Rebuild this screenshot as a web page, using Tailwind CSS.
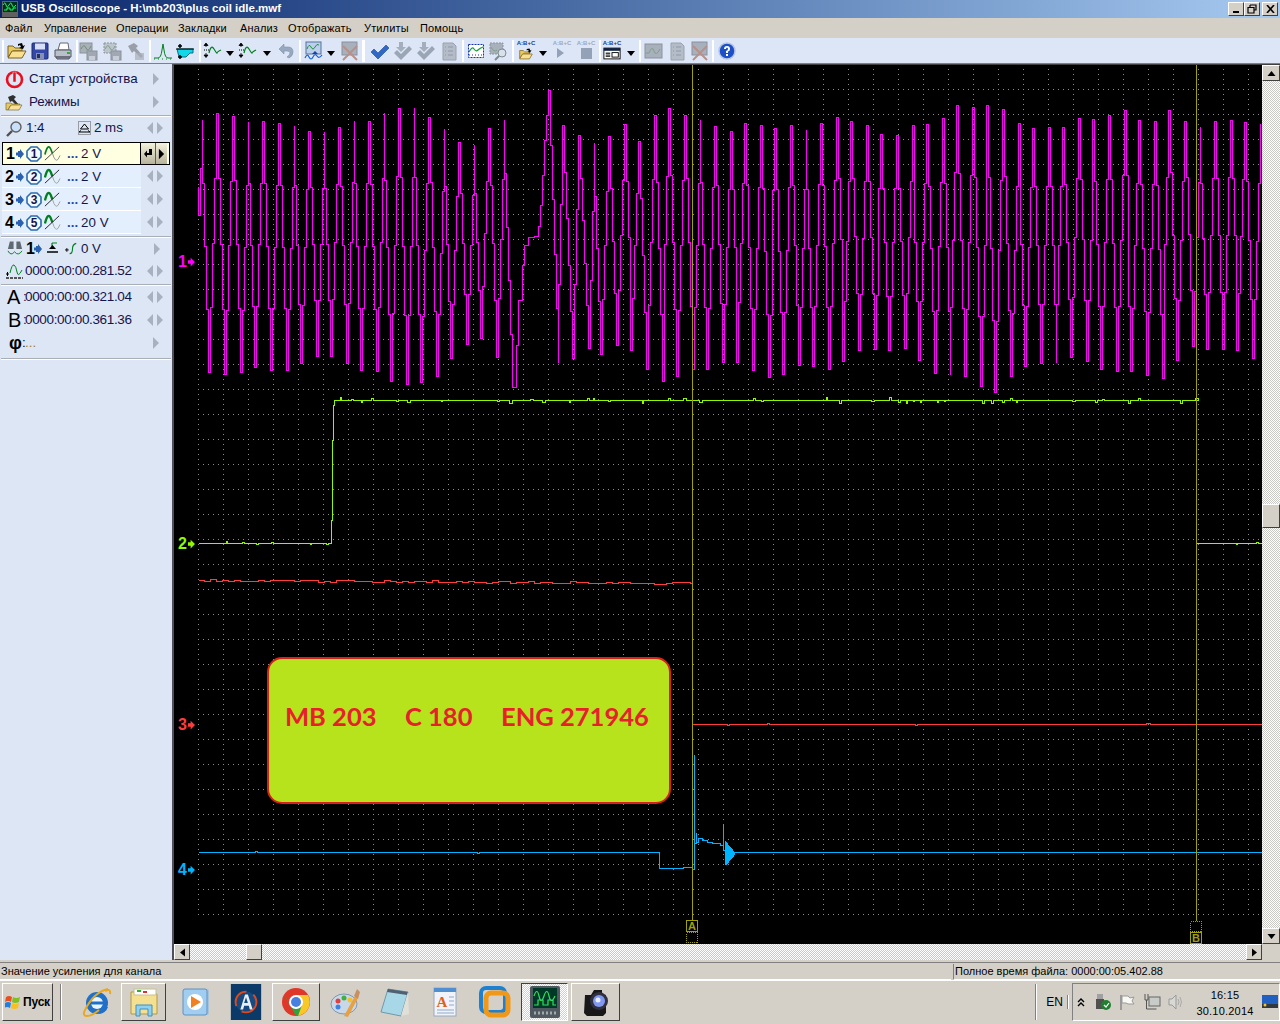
<!DOCTYPE html>
<html lang="ru">
<head>
<meta charset="utf-8">
<title>USB Oscilloscope</title>
<script src="https://cdn.jsdelivr.net/npm/@tailwindcss/browser@4"></script>
</head>
<body class="m-0 bg-[#d4d0c8]">
<svg width="0" height="0" class="absolute">
<defs>
<symbol id="folder" viewBox="0 0 20 20"><path d="M1 16V5h5l2 2h7v3H6L1 16z" fill="#e8c860" stroke="#7a6020"/><path d="M1 17l4-7h14l-4 7z" fill="#f8e090" stroke="#7a6020"/><path d="M11 3l4-1 1 3 2-1-2 4-4-1 2-1-1-2-2 1z" fill="#000"/></symbol>
<symbol id="save" viewBox="0 0 20 20"><rect x="2" y="2" width="16" height="16" rx="1" fill="#3448a8" stroke="#1c2870"/><rect x="5" y="2.500" width="10" height="6" fill="#d8e0f8"/><rect x="6" y="12" width="8" height="6" fill="#8890b0"/><rect x="7" y="13" width="3" height="4" fill="#20306c"/></symbol>
<symbol id="print" viewBox="0 0 20 20"><path d="M5 9l2-7h8l1 7z" fill="#fff" stroke="#667"/><path d="M2 9h16v7H2z" fill="#b8c0c8" stroke="#556"/><path d="M3 16l1 2h12l1-2z" fill="#8890a0" stroke="#556"/><rect x="14" y="11" width="3" height="2" fill="#30b030"/></symbol>
<symbol id="gw1" viewBox="0 0 20 20"><rect x="1" y="2" width="12" height="10" fill="#a8b0b8" stroke="#8a929a"/><path d="M2 8q3-6 5-1t5-2" fill="none" stroke="#6f8f78"/><rect x="8" y="10" width="10" height="9" fill="#a0a8b4" stroke="#8a929a"/><rect x="10" y="15" width="6" height="4" fill="#c8cdd8"/></symbol>
<symbol id="gw2" viewBox="0 0 20 20"><rect x="1" y="2" width="12" height="10" fill="#bcc4cc" stroke="#8a929a" stroke-dasharray="2 1"/><path d="M2 8q3-6 5-1t5-2" fill="none" stroke="#7f9f88"/><rect x="8" y="10" width="10" height="9" fill="#a0a8b4" stroke="#8a929a"/><rect x="10" y="15" width="6" height="4" fill="#c8cdd8"/></symbol>
<symbol id="hammer" viewBox="0 0 20 20"><path d="M2 5l6-3 4 3-2 2 7 8-2 2-7-7-2 2z" fill="#9aa0aa"/><rect x="9" y="12" width="9" height="7" fill="#a8aeb8" opacity=".7"/></symbol>
<symbol id="peak" viewBox="0 0 20 20"><path d="M1 17h4q3 0 4-8l1-6 1 6q1 8 4 8h4" fill="none" stroke="#00801c"/><path d="M1 18h18" stroke="#00801c" stroke-dasharray="1 3"/></symbol>
<symbol id="cyan" viewBox="0 0 20 20"><path d="M2 8h16v4h-3l-4 4H4z" fill="#10d8e8" stroke="#087080"/><path d="M5 3v4M3 5h4M5 14v4M3 16h4" stroke="#000" stroke-width="1.500"/><path d="M1 8h18" stroke="#000"/></symbol>
<symbol id="gain" viewBox="0 0 20 20"><path d="M3 3v3M1 4.500L3 2l2 2.500zM1 14l2 2.500L5 14zM3 12v3" stroke="#000" fill="#000" stroke-width=".8"/><path d="M1 9h5" stroke="#000" stroke-dasharray="1 1"/><path d="M6 12q2-9 5-4t3 4 4-3" fill="none" stroke="#008020" stroke-width="1.200"/></symbol>
<symbol id="undo" viewBox="0 0 20 20"><path d="M3 8l5-5v3h4q5 0 5 5 0 4-4 6l-2-1q3-2 3-4 0-2-3-2H8v3z" fill="#98a8c0" stroke="#8090a8" stroke-width=".6"/></symbol>
<symbol id="cmp" viewBox="0 0 20 20"><rect x="2" y="1" width="15" height="12" fill="#bcd0ee" stroke="#56709c"/><path d="M3 8q2-6 4-2t4 0 4-2" fill="none" stroke="#209040"/><path d="M1 17q2-5 4-1t4 0 4-1 5-1" fill="none" stroke="#1060e0" stroke-width="1.200"/><path d="M8 13l3-3 3 3z" fill="#2040a0"/></symbol>
<symbol id="xg" viewBox="0 0 20 20"><rect x="2" y="1" width="15" height="13" fill="#a8b0bc" stroke="#8890a0"/><path d="M3 5l14 14M17 5L3 19" stroke="#b89088" stroke-width="2"/></symbol>
<symbol id="check" viewBox="0 0 20 20"><path d="M1 11l3-3 4 4 8-8 3 3-11 11z" fill="#3068c8" stroke="#1c488c" stroke-width=".6"/></symbol>
<symbol id="checkd" viewBox="0 0 20 20"><path d="M1 12l3-3 4 4 8-8 3 3-11 11z" fill="#9aa5b5"/><path d="M6 6V1h4v5h3l-5 5-5-5z" fill="#a4aebc"/></symbol>
<symbol id="doc" viewBox="0 0 20 20"><path d="M4 2h10l3 3v14H4z" fill="#b4bcc8" stroke="#98a2b0"/><path d="M6 6h1M9 6h5M6 10h1M9 10h5M6 14h1M9 14h5" stroke="#8e98a8"/></symbol>
<symbol id="frame" viewBox="0 0 20 20"><rect x="2.500" y="3.500" width="15" height="13" fill="#fff" stroke="#1030b0" stroke-dasharray="2 1"/><path d="M3 11q3-6 5-3t4 1 5-3" fill="none" stroke="#10a030" stroke-width="1.200"/><path d="M3 14h14" stroke="#1030b0" stroke-dasharray="1 2"/></symbol>
<symbol id="zoomg" viewBox="0 0 20 20"><rect x="1" y="2" width="13" height="11" fill="#a8b0bc" stroke="#8a929e" stroke-dasharray="2 1"/><path d="M2 6q3 6 6 3" fill="none" stroke="#7f9f88"/><circle cx="13" cy="12" r="4" fill="#d8e0ec" stroke="#808890"/><path d="M10 15l-4 4" stroke="#808890" stroke-width="2"/></symbol>
<symbol id="scr" viewBox="0 0 20 14"><rect x="1" y="1" width="18" height="12" fill="#fff" stroke="#000"/><rect x="1" y="1" width="18" height="3" fill="#102040"/><path d="M3 7h5M3 10h5" stroke="#404040" stroke-width="2"/><rect x="10" y="6" width="7" height="5" fill="#fff" stroke="#000"/></symbol>
<symbol id="wgd" viewBox="0 0 20 20"><rect x="1" y="3" width="17" height="14" fill="#a8b0bc" stroke="#8a929e"/><path d="M2 12h3q3-8 5-2t6-2" fill="none" stroke="#7f9f88"/></symbol>
<symbol id="help" viewBox="0 0 20 20"><circle cx="10" cy="10" r="8" fill="#1c50c8" stroke="#b8c4e0" stroke-width="1.500"/><path d="M7 8q0-3 3-3t3 3q0 2-2 2.500V12H9v-2q2-.5 2-2t-1-1.500T9 8z" fill="#fff"/><rect x="9" y="13" width="2" height="2" fill="#fff"/></symbol>
<symbol id="tri" viewBox="0 0 8 5"><path d="M0 0h8L4 5z" fill="#000"/></symbol>
<symbol id="lr" viewBox="0 0 18 12"><path d="M7 0v12L1 6zM11 0v12l6-6z" fill="#a8b1bf"/></symbol>
<symbol id="r" viewBox="0 0 8 12"><path d="M1 0v12l6-6z" fill="#a8b1bf"/></symbol>
<symbol id="ba" viewBox="0 0 8 10"><path d="M0 3.500h2V2h2V0l4 5-4 5V8H2V6.500H0z" fill="#2a62b0"/></symbol>
<symbol id="ring" viewBox="0 0 16 16"><path d="M5 1h6l4 4v6l-4 4H5l-4-4V5z" fill="#f4f8ff" stroke="#2a6cb0" stroke-width="1.600"/></symbol>
<symbol id="wv" viewBox="0 0 18 18"><path d="M1 10q3-12 6-6l2 5" fill="none" stroke="#008020" stroke-width="1.800"/><path d="M9 9q3 10 6 6l2-4" fill="none" stroke="#909090"/><path d="M1 16L16 2" stroke="#404040"/></symbol>
<symbol id="wv2" viewBox="0 0 18 18"><path d="M1 10q3-12 6-6l2 5" fill="none" stroke="#008020" stroke-width="2.400"/><path d="M9 9q3 10 6 6l2-4" fill="none" stroke="#a0a0a0"/><path d="M1 16L16 2" stroke="#202020"/></symbol>
</defs>
</svg>

<div class="w-[1280px] h-[1024px] overflow-hidden flex flex-col bg-[#d4d0c8] font-['Liberation_Sans',Arial,sans-serif]">

<!-- title bar -->
<div class="h-[18px] flex items-center bg-gradient-to-r from-[#0a246a] to-[#a6caf0] shrink-0">
  <svg class="ml-[2px] w-[16px] h-[16px]" viewBox="0 0 16 16"><rect width="16" height="16" fill="#606060"/><rect x="1" y="1" width="14" height="10" fill="#003020"/><path d="M1 4q2-4 3 0t3 0 3 0 4 0M2 9h3V7h3v2h3V7h3" fill="none" stroke="#20ff60"/></svg>
  <span class="ml-[3px] text-white font-bold text-[11.500px] leading-none">USB Oscilloscope - H:\mb203\plus coil idle.mwf</span>
  <div class="ml-auto flex mr-[2px] gap-0">
    <div class="w-[16px] h-[14px] bg-[#d4d0c8] border border-t-white border-l-white border-r-[#404040] border-b-[#404040] flex items-end justify-center pb-[2px]"><div class="w-[6px] h-[2px] bg-black"></div></div>
    <div class="w-[16px] h-[14px] bg-[#d4d0c8] border border-t-white border-l-white border-r-[#404040] border-b-[#404040] flex items-center justify-center"><svg width="10" height="10" viewBox="0 0 10 10"><path d="M3 1h6v5H7M3 1v2M1 3.500h6v5.500H1z" fill="none" stroke="#000" stroke-width="1.200"/></svg></div>
    <div class="ml-[2px] w-[16px] h-[14px] bg-[#d4d0c8] border border-t-white border-l-white border-r-[#404040] border-b-[#404040] flex items-center justify-center"><svg width="9" height="8" viewBox="0 0 9 8"><path d="M1 0l7 8M8 0L1 8" stroke="#000" stroke-width="1.600"/></svg></div>
  </div>
</div>

<!-- menu -->
<div class="h-[20px] flex items-center pl-[5px] text-[11px] text-black shrink-0 tracking-[0.15px]">
  <span class="w-[39px]">Файл</span><span class="w-[72px]">Управление</span><span class="w-[62px]">Операции</span><span class="w-[62px]">Закладки</span><span class="w-[48px]">Анализ</span><span class="w-[76px]">Отображать</span><span class="w-[56px]">Утилиты</span><span>Помощь</span>
</div>

<!-- toolbar -->
<div class="h-[26px] flex items-center bg-[#dde6f6] shrink-0 border-b border-[#808080] relative">
  <div class="ml-[2px] w-[2px] h-[22px] bg-white"></div>
  <svg class="ml-[3px] w-[20px] h-[20px]"><use href="#folder"/></svg>
  <svg class="ml-[3px] w-[20px] h-[20px]"><use href="#save"/></svg>
  <svg class="ml-[3px] w-[20px] h-[20px]"><use href="#print"/></svg>
  <div class="ml-[3px] w-[2px] h-[22px] bg-white"></div>
  <svg class="ml-[1px] w-[20px] h-[20px]"><use href="#gw1"/></svg>
  <svg class="ml-[4px] w-[20px] h-[20px]"><use href="#gw2"/></svg>
  <svg class="ml-[3px] w-[20px] h-[20px]"><use href="#hammer"/></svg>
  <div class="ml-[3px] w-[2px] h-[22px] bg-white"></div>
  <svg class="ml-[2px] w-[20px] h-[20px]"><use href="#peak"/></svg>
  <svg class="ml-[2px] w-[20px] h-[20px]"><use href="#cyan"/></svg>
  <div class="ml-[4px] w-[2px] h-[22px] bg-white"></div>
  <svg class="ml-[2px] w-[20px] h-[20px]"><use href="#gain"/></svg>
  <svg class="ml-[3px] w-[8px] h-[5px] mt-[5px]"><use href="#tri"/></svg>
  <svg class="ml-[4px] w-[20px] h-[20px]"><use href="#gain"/></svg>
  <svg class="ml-[5px] w-[8px] h-[5px] mt-[5px]"><use href="#tri"/></svg>
  <svg class="ml-[5px] w-[20px] h-[20px]"><use href="#undo"/></svg>
  <div class="ml-[3px] w-[2px] h-[22px] bg-white"></div>
  <svg class="ml-[3px] w-[20px] h-[20px]"><use href="#cmp"/></svg>
  <svg class="ml-[3px] w-[8px] h-[5px] mt-[5px]"><use href="#tri"/></svg>
  <svg class="ml-[5px] w-[20px] h-[20px]"><use href="#xg"/></svg>
  <div class="ml-[2px] w-[3px] h-[22px] bg-white"></div>
  <svg class="ml-[5px] w-[20px] h-[20px]"><use href="#check"/></svg>
  <svg class="ml-[3px] w-[20px] h-[20px]"><use href="#checkd"/></svg>
  <svg class="ml-[3px] w-[20px] h-[20px]"><use href="#checkd"/></svg>
  <svg class="ml-[3px] w-[20px] h-[20px]"><use href="#doc"/></svg>
  <div class="ml-[3px] w-[2px] h-[22px] bg-white"></div>
  <svg class="ml-[2px] w-[20px] h-[20px]"><use href="#frame"/></svg>
  <svg class="ml-[3px] w-[20px] h-[20px]"><use href="#zoomg"/></svg>
  <div class="ml-[3px] w-[2px] h-[22px] bg-white"></div>
  <div class="ml-[2px] w-[20px] h-[22px] flex flex-col items-center"><span class="text-[6px] leading-[7px] font-bold text-[#1c3a90] whitespace-nowrap">A:B+C</span><svg class="w-[18px] h-[14px]" viewBox="0 0 20 16"><use href="#folder"/></svg></div>
  <svg class="ml-[3px] w-[8px] h-[5px] mt-[5px]"><use href="#tri"/></svg>
  <div class="ml-[5px] w-[20px] h-[22px] flex flex-col items-center"><span class="text-[6px] leading-[7px] font-bold text-[#a0a8b8] whitespace-nowrap">A:B+C</span><svg class="w-[10px] h-[13px] -ml-[2px]" viewBox="0 0 10 13"><path d="M1 1v10l7-5z" fill="#94a2b8"/></svg></div>
  <div class="ml-[4px] w-[20px] h-[22px] flex flex-col items-center"><span class="text-[6px] leading-[7px] font-bold text-[#a0a8b8] whitespace-nowrap">A:B+C</span><div class="w-[11px] h-[11px] mt-[1px] bg-[#94a2b8]"></div></div>
  <div class="ml-[3px] w-[2px] h-[22px] bg-white"></div>
  <div class="ml-[1px] w-[20px] h-[22px] flex flex-col items-center"><span class="text-[6px] leading-[7px] font-bold text-[#1c3a90] whitespace-nowrap">A:B+C</span><svg class="w-[18px] h-[13px]"><use href="#scr"/></svg></div>
  <svg class="ml-[5px] w-[8px] h-[5px] mt-[5px]"><use href="#tri"/></svg>
  <div class="ml-[4px] w-[2px] h-[22px] bg-white"></div>
  <svg class="ml-[3px] w-[20px] h-[20px]"><use href="#wgd"/></svg>
  <svg class="ml-[3px] w-[20px] h-[20px]"><use href="#doc"/></svg>
  <svg class="ml-[3px] w-[20px] h-[20px]"><use href="#xg"/></svg>
  <div class="ml-[2px] w-[2px] h-[22px] bg-white"></div>
  <svg class="ml-[3px] w-[20px] h-[20px]"><use href="#help"/></svg>
</div>

<!-- main -->
<div class="flex h-[896px] shrink-0">
  <!-- sidebar -->
  <aside class="w-[174px] shrink-0 bg-[#dce6f5] border-r-2 border-[#50505a] text-[#14144c] text-[13.330px] relative flex flex-col">
    <div class="mt-[1px] h-[28px] flex items-center pl-[5px]">
      <svg class="w-[19px] h-[19px]" viewBox="0 0 19 19"><circle cx="9.500" cy="9.500" r="7.500" fill="none" stroke="#e81020" stroke-width="2.600"/><rect x="8" y="2" width="3" height="10" fill="#e81020" stroke="#dce6f5" stroke-width=".5"/></svg>
      <span class="ml-[5px] w-[123px] whitespace-nowrap">Старт устройства</span>
      <svg class="w-[8px] h-[12px]"><use href="#r"/></svg>
    </div>
    <div class="h-[18px] flex items-center pl-[5px]">
      <svg class="w-[19px] h-[17px]" viewBox="0 0 19 17"><path d="M3 3l5-2 3 2-2 2 5 6-2 1-5-5-2 1z" fill="#303030"/><path d="M1 9h5l1 1h8l-1 2H5l-2 4H1z" fill="#e8c860" stroke="#6a5a20" stroke-width=".6"/><path d="M3 16l3-5h11l-3 5z" fill="#f8e098" stroke="#6a5a20" stroke-width=".6"/></svg>
      <span class="ml-[5px] w-[123px]">Режимы</span>
      <svg class="w-[8px] h-[12px]"><use href="#r"/></svg>
    </div>
    <div class="mt-[4px] h-[2px] mx-[1px] bg-[#a8adb6] border-b border-white"></div>
    <div class="h-[22px] flex items-center pl-[6px]">
      <svg class="w-[17px] h-[17px]" viewBox="0 0 17 17"><circle cx="10" cy="7" r="5" fill="#c8e0fa" stroke="#606060" stroke-width="1.400"/><path d="M6 11l-5 5" stroke="#505050" stroke-width="2.400"/></svg>
      <span class="ml-[3px] w-[52px]">1:4</span>
      <svg class="w-[13px] h-[14px]" viewBox="0 0 13 14"><rect x=".5" y=".5" width="12" height="13" fill="none" stroke="#555" stroke-dasharray="1 1"/><path d="M6.500 3l4 5h-8zM1 11h11M1 11l2-1.500M12 11l-2-1.500" fill="none" stroke="#000"/></svg>
      <span class="ml-[3px] w-[52px] whitespace-nowrap">2 ms</span>
      <svg class="w-[18px] h-[12px] mb-[1px]"><use href="#lr"/></svg>
    </div>
    <!-- channels -->
    <div class="mt-[3px] ml-[2px] w-[168px] h-[23px] flex items-center border border-black bg-[#ffffe1]">
      <span class="ml-[3px] w-[9px] text-[16px] font-bold text-black leading-none">1</span><svg class="w-[8px] h-[10px] ml-[1px]"><use href="#ba"/></svg>
      <div class="relative w-[16px] h-[16px] ml-[2px] flex items-center justify-center"><svg class="absolute inset-0 w-[16px] h-[16px]"><use href="#ring"/></svg><span class="relative text-[12px] font-bold text-[#14144c] leading-none">1</span></div>
      <svg class="w-[17px] h-[17px] ml-[2px]"><use href="#wv"/></svg>
      <span class="ml-[6px] text-[#1a4aa8] font-bold">...</span><span class="ml-[3px] w-[59px]">2 V</span>
      <div class="h-full w-[27px] flex items-center justify-center gap-[2px] bg-gradient-to-b from-[#f4f1dc] to-[#b8b49c] border-l border-black"><svg width="9" height="11" viewBox="0 0 9 11"><path d="M8 1H5v4H3V2.500L0 6l3 3.500V7h5z" fill="#000"/></svg><div class="w-px h-full bg-[#605c48]"></div><svg width="7" height="12" viewBox="0 0 8 12"><path d="M1 0v12l6-6z" fill="#000"/></svg></div>
    </div>
    <div class="ml-[2px] h-[23px] flex items-center">
      <div class="w-[139px] h-[23px] pt-[1px] flex items-center bg-[#e3effc] border-b border-white">
        <span class="ml-[3px] w-[9px] text-[16px] font-bold text-black leading-none">2</span><svg class="w-[8px] h-[10px] ml-[2px]"><use href="#ba"/></svg>
        <div class="relative w-[16px] h-[16px] ml-[2px] flex items-center justify-center"><svg class="absolute inset-0 w-[16px] h-[16px]"><use href="#ring"/></svg><span class="relative text-[12px] font-bold text-[#14144c] leading-none">2</span></div>
        <svg class="w-[17px] h-[17px] ml-[2px]"><use href="#wv2"/></svg>
        <span class="ml-[6px] text-[#1a4aa8] font-bold">...</span><span class="ml-[3px]">2 V</span>
      </div>
      <svg class="ml-[5px] mb-[2px] w-[18px] h-[12px]"><use href="#lr"/></svg>
    </div>
    <div class="ml-[2px] h-[23px] flex items-center">
      <div class="w-[139px] h-[23px] pt-[1px] flex items-center bg-[#e3effc] border-b border-white">
        <span class="ml-[3px] w-[9px] text-[16px] font-bold text-black leading-none">3</span><svg class="w-[8px] h-[10px] ml-[2px]"><use href="#ba"/></svg>
        <div class="relative w-[16px] h-[16px] ml-[2px] flex items-center justify-center"><svg class="absolute inset-0 w-[16px] h-[16px]"><use href="#ring"/></svg><span class="relative text-[12px] font-bold text-[#14144c] leading-none">3</span></div>
        <svg class="w-[17px] h-[17px] ml-[2px]"><use href="#wv2"/></svg>
        <span class="ml-[6px] text-[#1a4aa8] font-bold">...</span><span class="ml-[3px]">2 V</span>
      </div>
      <svg class="ml-[5px] mb-[2px] w-[18px] h-[12px]"><use href="#lr"/></svg>
    </div>
    <div class="ml-[2px] h-[23px] flex items-center">
      <div class="w-[139px] h-[23px] pt-[1px] flex items-center bg-[#e3effc] border-b border-white">
        <span class="ml-[3px] w-[9px] text-[16px] font-bold text-black leading-none">4</span><svg class="w-[8px] h-[10px] ml-[2px]"><use href="#ba"/></svg>
        <div class="relative w-[16px] h-[16px] ml-[2px] flex items-center justify-center"><svg class="absolute inset-0 w-[16px] h-[16px]"><use href="#ring"/></svg><span class="relative text-[12px] font-bold text-[#14144c] leading-none">5</span></div>
        <svg class="w-[17px] h-[17px] ml-[2px]"><use href="#wv2"/></svg>
        <span class="ml-[6px] text-[#1a4aa8] font-bold">...</span><span class="ml-[3px]">20 V</span>
      </div>
      <svg class="ml-[5px] mb-[2px] w-[18px] h-[12px]"><use href="#lr"/></svg>
    </div>
    <div class="mt-[2px] h-[2px] mx-[1px] bg-[#a8adb6] border-b border-white"></div>
    <div class="h-[21px] flex items-center pl-[7px]">
      <svg class="w-[16px] h-[17px]" viewBox="0 0 17 17"><path d="M3 1h4v8H1zM10 1h4l2 8h-6z" fill="#606870"/><path d="M1 11q3 6 7 1 4 5 8-1" fill="none" stroke="#008020"/></svg>
      <span class="ml-[3px] w-[8px] text-[16px] font-bold leading-none text-black">1</span><svg class="w-[8px] h-[10px]"><use href="#ba"/></svg>
      <svg class="ml-[4px] w-[13px] h-[13px]" viewBox="0 0 13 13"><path d="M6 1h5M6 1v5" fill="none" stroke="#008020" stroke-width="1.200"/><path d="M3 7h7l-3.500-4z" fill="#000"/><path d="M1 10h11" stroke="#000" stroke-width="1.500"/></svg>
      <svg class="ml-[6px] w-[14px] h-[14px]" viewBox="0 0 15 14"><path d="M0 8h4M2 6v4" stroke="#000"/><path d="M5 12q3 0 3-5t4-6" fill="none" stroke="#008020" stroke-width="1.200"/></svg>
      <span class="ml-[2px] w-[72px] whitespace-nowrap">0 V</span>
      <svg class="w-[8px] h-[12px]"><use href="#r"/></svg>
    </div>
    <div class="h-[24px] flex items-center pl-[5px] tracking-[-0.35px] text-[13.500px]">
      <svg class="w-[19px] h-[18px]" viewBox="0 0 19 18"><path d="M1 12h3M2.500 10v4" stroke="#000"/><path d="M5 11q2-9 4-8t3 7 5-2" fill="none" stroke="#008020"/><path d="M1 16h17" stroke="#555" stroke-width="2" stroke-dasharray="3 1"/></svg>
      <span class="ml-[1px] w-[113px] whitespace-nowrap">0000:00:00.281.52</span>
      <svg class="ml-[8px] w-[18px] h-[12px]"><use href="#lr"/></svg>
    </div>
    <div class="mt-[1px] h-[2px] mx-[1px] bg-[#a8adb6] border-b border-white"></div>
    <div class="h-[22px] flex items-center pl-[7px] tracking-[-0.35px] text-[13.500px]">
      <span class="text-[20px] leading-none text-black w-[16px]">A</span><span class="w-[2px]">:</span>
      <span class="w-[115px] whitespace-nowrap">0000:00:00.321.04</span>
      <svg class="ml-[6px] w-[18px] h-[12px]"><use href="#lr"/></svg>
    </div>
    <div class="h-[24px] flex items-center pl-[8px] tracking-[-0.35px] text-[13.500px]">
      <span class="text-[20px] leading-none text-black w-[15px]">B</span><span class="w-[2px]">:</span>
      <span class="w-[115px] whitespace-nowrap">0000:00:00.361.36</span>
      <svg class="ml-[6px] w-[18px] h-[12px]"><use href="#lr"/></svg>
    </div>
    <div class="h-[21px] flex items-center pl-[9px]">
      <span class="text-[18px] leading-none text-black font-bold w-[13px]">φ</span><span class="w-[2px] text-[#14144c]">:</span><span class="ml-[1px] w-[127px] text-[#a08030]">...</span>
      <svg class="w-[8px] h-[12px]"><use href="#r"/></svg>
    </div>
    <div class="mt-[5px] h-[2px] mx-[1px] bg-[#a8adb6] border-b border-white"></div>
  </aside>

  <!-- plot + scrollbars -->
  <div class="w-[1106px] shrink-0 flex flex-col">
    <div class="h-[880px] flex shrink-0 border-t border-[#404040]">
      <div class="relative w-[1088px] h-[879px] bg-black overflow-hidden shrink-0">
        <svg id="plot" class="absolute inset-0" width="1088" height="879" viewBox="174 65 1088 879" shape-rendering="crispEdges">
          <defs>
            <pattern id="grid" x="198" y="64" width="25" height="25" patternUnits="userSpaceOnUse">
              <rect x="0" y="0" width="1" height="1" fill="#8c8c8c"/><rect x="5" y="0" width="1" height="1" fill="#8c8c8c"/><rect x="10" y="0" width="1" height="1" fill="#8c8c8c"/><rect x="15" y="0" width="1" height="1" fill="#8c8c8c"/><rect x="20" y="0" width="1" height="1" fill="#8c8c8c"/>
              <rect x="0" y="5" width="1" height="1" fill="#8c8c8c"/><rect x="0" y="10" width="1" height="1" fill="#8c8c8c"/><rect x="0" y="15" width="1" height="1" fill="#8c8c8c"/><rect x="0" y="20" width="1" height="1" fill="#8c8c8c"/>
            </pattern>
          </defs>
          <rect x="198" y="69" width="1064" height="849" fill="url(#grid)"/>
          <path id="tg" fill="none" stroke="#90f800"/>
          <path id="tr" fill="none" stroke="#ff3c3c"/>
          <path id="tb" fill="none" stroke="#00b4ff"/>
          <path id="tm" fill="none" stroke="#ff00ff"/>
          <path d="M692.500 65V920M1196.500 65V921" stroke="#a0a000" fill="none"/>
          <rect x="686.500" y="920.500" width="11" height="11" fill="none" stroke="#a0a000"/>
          <rect x="686.500" y="932.500" width="11" height="10" fill="none" stroke="#a0a000" stroke-dasharray="1 1"/>
          <rect x="1190.500" y="921.500" width="11" height="10" fill="none" stroke="#a0a000" stroke-dasharray="1 1"/>
          <rect x="1190.500" y="932.500" width="11" height="11" fill="none" stroke="#a0a000"/>
          <text x="692" y="930" text-anchor="middle" font-size="11" font-weight="700" fill="#a0a000" font-family="Liberation Sans">A</text>
          <text x="1196" y="942" text-anchor="middle" font-size="11" font-weight="700" fill="#a0a000" font-family="Liberation Sans">B</text>
        </svg>
        <div class="absolute left-[4px] top-[189px] flex items-center gap-[1px] text-[#ff00ff] font-bold text-[16px] leading-none">1<svg class="w-[7px] h-[10px]" viewBox="0 0 8 10"><path d="M0 3h3V0l5 5-5 5V7H0z" fill="#ff00ff"/></svg></div>
        <div class="absolute left-[4px] top-[471px] flex items-center gap-[1px] text-[#90f800] font-bold text-[16px] leading-none">2<svg class="w-[7px] h-[10px]" viewBox="0 0 8 10"><path d="M0 3h3V0l5 5-5 5V7H0z" fill="#90f800"/></svg></div>
        <div class="absolute left-[4px] top-[652px] flex items-center gap-[1px] text-[#ff3c3c] font-bold text-[16px] leading-none">3<svg class="w-[7px] h-[10px]" viewBox="0 0 8 10"><path d="M0 3h3V0l5 5-5 5V7H0z" fill="#ff3c3c"/></svg></div>
        <div class="absolute left-[4px] top-[797px] flex items-center gap-[1px] text-[#00b4ff] font-bold text-[16px] leading-none">4<svg class="w-[7px] h-[10px]" viewBox="0 0 8 10"><path d="M0 3h3V0l5 5-5 5V7H0z" fill="#00b4ff"/></svg></div>
        <div class="absolute left-[93px] top-[592px] w-[404px] h-[147px] rounded-[15px] border-2 border-[#d8201c] bg-[#b6e31c] text-[#e8202c] font-['Lato',sans-serif] font-bold text-[25.500px] leading-none flex pt-[45px] pl-[16px]">
          <span class="w-[120px] whitespace-nowrap">MB 203</span><span class="w-[96px] whitespace-nowrap">C 180</span><span class="whitespace-nowrap">ENG 271946</span>
        </div>
      </div>
      <!-- v scrollbar -->
      <div class="w-[18px] h-[879px] flex flex-col bg-[repeating-conic-gradient(#c8c8c4_0_25%,#ffffff_0_50%)] bg-[length:2px_2px]">
        <div class="h-[16px] bg-[#d4d0c8] border border-t-white border-l-white border-r-[#404040] border-b-[#404040] flex items-center justify-center"><svg width="9" height="5" viewBox="0 0 8 5"><path d="M0 5h8L4 0z"/></svg></div>
        <div class="mt-[423px] h-[24px] bg-[#d4d0c8] border border-t-white border-l-white border-r-[#404040] border-b-[#404040]"></div>
        <div class="mt-auto h-[16px] bg-[#d4d0c8] border border-t-white border-l-white border-r-[#404040] border-b-[#404040] flex items-center justify-center"><svg width="9" height="5" viewBox="0 0 8 5"><path d="M0 0h8L4 5z"/></svg></div>
      </div>
    </div>
    <!-- h scrollbar -->
    <div class="h-[16px] w-[1088px] flex shrink-0 bg-[repeating-conic-gradient(#c8c8c4_0_25%,#ffffff_0_50%)] bg-[length:2px_2px]">
      <div class="w-[16px] bg-[#d4d0c8] border border-t-white border-l-white border-r-[#404040] border-b-[#404040] flex items-center justify-center"><svg width="5" height="9" viewBox="0 0 5 8"><path d="M5 0v8L0 4z"/></svg></div>
      <div class="ml-[56px] w-[16px] bg-[#d4d0c8] border border-t-white border-l-white border-r-[#404040] border-b-[#404040]"></div>
      <div class="ml-auto w-[16px] bg-[#d4d0c8] border border-t-white border-l-white border-r-[#404040] border-b-[#404040] flex items-center justify-center"><svg width="5" height="9" viewBox="0 0 5 8"><path d="M0 0v8l5-4z"/></svg></div>
    </div>
  </div>
</div>

<!-- status bar -->
<div class="h-[3px] shrink-0 border-b border-[#808080]"></div>
<div class="h-[17px] shrink-0 flex text-[11px] text-black leading-none pt-[1px]">
  <div class="w-[951px] flex items-center border-b border-white pl-[1px]"><span>Значение усиления для канала</span></div>
  <div class="ml-[2px] flex-1 flex items-center pl-[1px] border-l border-[#808080] border-b border-b-white"><span>Полное время файла: 0000:00:05.402.88</span></div>
</div>

<!-- taskbar -->
<div class="h-[43px] shrink-0 flex items-center border-t border-white relative">
  <div class="ml-[2px] w-[51px] h-[38px] flex items-center justify-center gap-[2px] bg-[#d4d0c8] border border-t-white border-l-white border-r-[#404040] border-b-[#404040]">
    <svg width="16" height="16" viewBox="0 0 16 16"><path d="M1 3q3-2 6 0l-1 5q-3-2-6 0z" fill="#e85020"/><path d="M8 3q3 2 7 0l-1 5q-4 2-7 0z" fill="#80c020"/><path d="M0 9q3-2 6 0l-1 5q-3-2-6 0z" fill="#2080e0"/><path d="M7 9q3 2 7 0l-1 5q-4 2-7 0z" fill="#f8c020"/></svg>
    <span class="font-bold text-[12px] text-black tracking-[-0.2px]">Пуск</span>
  </div>
  <div class="ml-[7px] w-[2px] h-[36px] bg-white border-l border-[#808080]"></div>
  <!-- IE -->
  <svg class="ml-[18px] w-[32px] h-[32px]" viewBox="0 0 32 32"><circle cx="17" cy="17" r="11" fill="#2070c8"/><circle cx="17" cy="17" r="6" fill="#e8f4ff"/><rect x="11" y="15.500" width="13" height="3" fill="#2070c8"/><path d="M22 21h6q-2 6-9 7z" fill="#2070c8"/><path d="M28 3Q14 6 5 24q-3 6 2 6t12-6M25 5q6-3 5 3" fill="none" stroke="#e8a820" stroke-width="2"/></svg>
  <!-- explorer -->
  <div class="ml-[9px] w-[45px] h-[38px] flex items-center justify-center bg-[#d4d0c8] border border-t-white border-l-white border-r-[#404040] border-b-[#404040]">
    <svg class="w-[34px] h-[32px]" viewBox="0 0 34 32"><path d="M4 6h12l2 2h12v20H4z" fill="#f4e090" stroke="#b09840"/><rect x="7" y="3" width="22" height="6" fill="#fff" stroke="#c8c090"/><rect x="10" y="4" width="4" height="2" fill="#30b030"/><rect x="16" y="5" width="4" height="2" fill="#e03030"/><path d="M9 30V19h16v11h-4v-7h-8v7z" fill="#90d0f0" stroke="#4090c0"/></svg>
  </div>
  <!-- WMP -->
  <svg class="ml-[15px] w-[32px] h-[32px]" viewBox="0 0 32 32"><rect x="4" y="3" width="24" height="26" rx="2" fill="#88bce8" opacity=".6"/><rect x="2" y="3" width="24" height="26" rx="2" fill="#a0cdf0" stroke="#6090c0"/><circle cx="14" cy="16" r="8" fill="#fff"/><path d="M10 10l10 6-10 6z" fill="#f08020"/></svg>
  <!-- Alcohol -->
  <svg class="ml-[17px] w-[32px] h-[36px]" viewBox="0 0 32 38"><rect width="32" height="38" fill="#0c3a68"/><circle cx="16" cy="19" r="11" fill="#164a80" stroke="#e04818" stroke-width="2" stroke-dasharray="22 8"/><path d="M10 27l5-16h3l5 16h-3l-1-4h-5l-1 4zM14 20h4l-2-6z" fill="#e8f0f8"/></svg>
  <!-- chrome -->
  <div class="ml-[10px] w-[48px] h-[38px] flex items-center justify-center bg-[#d4d0c8] border border-t-white border-l-white border-r-[#404040] border-b-[#404040]">
    <svg class="w-[30px] h-[30px]" viewBox="0 0 30 30"><circle cx="15" cy="15" r="14" fill="#e03828"/><path d="M15 29a14 14 0 0 0 12-21H15z" fill="#f8c828"/><path d="M3 8l6 10 6 11h2L21 18H10z" fill="#30a040"/><circle cx="15" cy="15" r="7" fill="#fff"/><circle cx="15" cy="15" r="5" fill="#4880e0"/></svg>
  </div>
  <!-- paint -->
  <svg class="ml-[9px] w-[32px] h-[32px]" viewBox="0 0 32 32"><ellipse cx="15" cy="18" rx="13" ry="10" fill="#c8d8e8" stroke="#8098b0"/><circle cx="9" cy="15" r="2.500" fill="#e04040"/><circle cx="15" cy="12" r="2.500" fill="#40b040"/><circle cx="21" cy="14" r="2.500" fill="#f0c030"/><circle cx="9" cy="21" r="2.500" fill="#4080e0"/><path d="M15 30l11-20 3 2-10 19z" fill="#e8a040"/><path d="M25 10l3-7 3 3-2 7z" fill="#c89060"/></svg>
  <!-- notepad -->
  <svg class="ml-[18px] w-[32px] h-[32px]" viewBox="0 0 32 32"><path d="M9 3l20 3-7 24-20-4z" fill="#a8d8e8" stroke="#7098a8"/><path d="M9 3l20 3-1 3-20-3z" fill="#506070"/><path d="M22 30l7-24 1 22z" fill="#e0e0d8"/></svg>
  <!-- wordpad -->
  <svg class="ml-[18px] w-[32px] h-[32px]" viewBox="0 0 32 32"><rect x="5" y="2" width="22" height="28" fill="#f0f4fa" stroke="#98a8c0"/><rect x="5" y="2" width="22" height="4" fill="#5090d0"/><path d="M20 11h5M20 15h5M20 19h5M8 24h17M8 27h17" stroke="#90a8c8"/><text x="13" y="21" text-anchor="middle" font-size="15" font-weight="700" fill="#e06018" font-family="Liberation Serif">A</text></svg>
  <!-- vmware -->
  <svg class="ml-[18px] w-[32px] h-[32px]" viewBox="0 0 32 32"><rect x="2" y="2" width="24" height="24" rx="5" fill="none" stroke="#2080d0" stroke-width="4"/><rect x="7" y="7" width="22" height="22" rx="5" fill="none" stroke="#f09818" stroke-width="5"/></svg>
  <!-- osc -->
  <div class="ml-[10px] w-[47px] h-[38px] flex items-center justify-center bg-[repeating-conic-gradient(#d4d0c8_0_25%,#ffffff_0_50%)] bg-[length:2px_2px] border border-t-[#404040] border-l-[#404040] border-r-white border-b-white">
    <svg class="w-[32px] h-[34px]" viewBox="0 0 32 34"><rect x="1" y="1" width="30" height="32" rx="2" fill="#505860"/><rect x="4" y="3" width="24" height="20" fill="#003828"/><path d="M5 11q3-9 5 0t5 0 5 0 6 0M5 20h4v-5h5v5h5v-5h5v5h3" fill="none" stroke="#30e060" stroke-width="1.200"/><path d="M5 28h22" stroke="#a0a8b0" stroke-width="3" stroke-dasharray="2 2"/></svg>
  </div>
  <!-- camera -->
  <div class="ml-[3px] w-[49px] h-[38px] flex items-center justify-center bg-[#d4d0c8] border border-t-white border-l-white border-r-[#404040] border-b-[#404040]">
    <svg class="w-[30px] h-[32px]" viewBox="0 0 30 32"><path d="M4 9h6l3-5h8v5h4v18l-3 3H6l-3-3z" fill="#181818"/><circle cx="18" cy="15" r="9" fill="#303040"/><circle cx="18" cy="15" r="6" fill="#8098f0"/><circle cx="17" cy="14" r="2.500" fill="#e8f0ff"/></svg>
  </div>

  <div class="ml-auto flex items-center h-[38px]">
    <div class="w-[2px] h-[36px] bg-white border-l border-[#808080]"></div>
    <span class="ml-[9px] text-[12px] text-black">EN</span>
    <div class="ml-[4px] w-[2px] h-[14px] bg-white border-l border-[#808080]"></div>
    <div class="ml-[3px] w-[208px] h-[38px] flex items-center border border-t-[#808080] border-l-[#808080] border-r-white border-b-white">
      <svg class="ml-[4px] w-[8px] h-[9px]" viewBox="0 0 8 9"><path d="M1 4l3-3 3 3M1 8l3-3 3 3" fill="none" stroke="#000" stroke-width="1.400"/></svg>
      <svg class="ml-[9px] w-[18px] h-[18px]" viewBox="0 0 18 18"><rect x="3" y="1" width="6" height="5" fill="#a0a0a0"/><rect x="2" y="6" width="8" height="10" fill="#505050"/><circle cx="12" cy="12" r="5" fill="#208030"/><path d="M10 12l2 2 3-4" fill="none" stroke="#fff" stroke-width="1.200"/></svg>
      <svg class="ml-[6px] w-[18px] h-[18px]" viewBox="0 0 18 18"><path d="M3 2v15" stroke="#888" stroke-width="1.500"/><path d="M4 3h6l2 2 4-1-2 4 2 3h-6l-2-1H4z" fill="#f8f8f4" stroke="#999"/></svg>
      <svg class="ml-[7px] w-[18px] h-[18px]" viewBox="0 0 18 18"><rect x="6" y="4" width="11" height="9" fill="#c8ccc8" stroke="#666"/><path d="M2 1v6h3V1M3.500 7v9h10" fill="none" stroke="#555"/></svg>
      <svg class="ml-[6px] w-[18px] h-[18px]" viewBox="0 0 18 18"><path d="M2 6h3l4-4v14l-4-4H2z" fill="#d8d8d4" stroke="#999"/><path d="M11 6q2 3 0 6M13 4q3 5 0 10" fill="none" stroke="#aaa"/></svg>
      <div class="ml-[9px] mt-[1px] w-[62px] flex flex-col items-center text-[11px] leading-[16px] text-black tracking-[0.2px]"><span>16:15</span><span class="whitespace-nowrap">30.10.2014</span></div>
      <svg class="ml-[6px] w-[16px] h-[14px]" viewBox="0 0 16 14"><rect width="16" height="12" fill="#2060c0"/><rect y="9" width="16" height="4" fill="#303840"/><circle cx="3" cy="10" r="1.500" fill="#f0c030"/></svg>
    </div>
  </div>
</div>
</div>

<script>
(function(){
  var top0=[120,113,116,122,121,123,126,131,132,127,121,121,113,108,108,117,129,142,145,128];
  var bot0=[372,374,372,367,370,370,363,356,356,363,370,371,381,384,382,376,358,344,338];
  var px0=[201,216,231,247,262,277,293,308,323,338,353,368,383,398,413,428,443,458,473,488];
  var ex=[[198,215]];
  for(var i=0;i<px0.length;i++){ex.push([px0[i],top0[i]]);if(i<bot0.length)ex.push([(px0[i]+px0[i+1])/2,bot0[i]]);}
  ex.push([496,357],[503,120],[512,387]);
  var manual=[[515,345],[518,300],[521,265],[524,245],[527,237],[533,236],[537,226],[540,205],[542,175],[544,140],[547,90],[557,363],[562,125],[572,358],[578,135],[587,348],[593,143]];
  var topT=[[600,140],[620,125],[640,140],[655,112],[670,110],[685,112],[700,122],[720,130],[750,125],[770,125],[800,130],[830,120],[850,118],[880,135],[905,130],[940,118],[955,108],[970,105],[985,105],[1000,110],[1015,118],[1030,130],[1060,125],[1090,118],[1120,112],[1135,115],[1150,125],[1165,110],[1180,115],[1200,130],[1215,120],[1230,118],[1245,125],[1262,122]];
  var botT=[[600,350],[620,345],[650,370],[665,380],[680,378],[695,370],[720,360],[750,370],[780,375],[810,365],[840,365],[870,345],[900,350],[935,370],[965,380],[980,385],[995,388],[1010,378],[1040,360],[1070,360],[1100,365],[1130,375],[1160,375],[1190,350],[1220,345],[1250,360],[1262,360]];
  function tab(t,x){for(var i=1;i<t.length;i++){if(x<=t[i][0]){var a=t[i-1],b=t[i];return a[1]+(b[1]-a[1])*(x-a[0])/(b[0]-a[0]);}}return t[t.length-1][1];}
  var d="M198.5 187V215";var lastX=198;
  function step(x,y){x=2*Math.round(x/2);y=Math.round(y);if(x>lastX){d+="H"+(x+.5);}d+="V"+y;lastX=x;}
  function seg(a,b){var n=Math.max(1,Math.round((b[0]-a[0])/2));for(var k=1;k<=n;k++){var t=k/n;step(a[0]+(b[0]-a[0])*t,a[1]+(b[1]-a[1])*t);}}
  for(var i=1;i<ex.length;i++)seg(ex[i-1],ex[i]);
  for(var i=0;i<manual.length;i++){if(i<10){step(manual[i][0],manual[i][1]);}else{seg(manual[i-1],manual[i]);}}
  var x=593,prev=[593,143],j=0;
  while(x<1258){
    var mid=x+7.6,nx=x+15.15;j++;
    var bb=[mid,tab(botT,mid)+4*Math.sin(j*1.7)];var tt=[nx,tab(topT,nx)+3*Math.sin(j*2.3)];
    seg(prev,bb);seg(bb,tt);prev=tt;x=nx;
  }
  document.getElementById("tm").setAttribute("d",d);

  function rnd(s){var v=Math.sin(s*12.9898)*43758.5453;return v-Math.floor(v);}
  function flat(x0,x1,y,amt,gap,seed){var p="";var xx=x0;var n=0;while(xx<x1){var w=gap*(.5+rnd(seed+n));var xn=Math.min(x1,xx+w);var dy=rnd(seed+n+.5)<.5?Math.round((rnd(seed+n+.3)-.5)*amt*2):0;p+="H"+(Math.round(xn)+.5)+"V"+(y+dy+.5);xx=xn;if(dy){xx=xn+1+rnd(seed+n)*2;p+="H"+(Math.round(xx)+.5)+"V"+(y+.5);}n++;}return p;}
  var g="M198.5 543.5"+flat(198,330,543,2,14,1)+"H331.5V520.5H332.5V440.5H333.5V405.5H334.5V400.5"+flat(335,1195,400,3,9,2)+"H1196.5V543.5"+flat(1197,1262,543,1,20,3);
  document.getElementById("tg").setAttribute("d",g);
  var r="M198.5 580.5",rr="";
  for(var xx=204;xx<692;xx+=6){var yy=Math.round(580+(xx-198)/494*3+(rnd(xx)-.5)*2.6);rr+="H"+(xx+.5)+"V"+(yy+.5);}
  r+=rr+"H692.5V724.5"+flat(692,1140,724,1,40,4)+"H1146.5V723.5H1150.5V724.5H1262";
  document.getElementById("tr").setAttribute("d",r);
  var b="M198.5 852.5"+flat(198,659,852,1,60,5)+"H659.5V868.5H683.5V867.5H692.5V869.5H694.5V754.5V843.5H696.5V832.5V842.5H698.5V838.5H702.5V840.5H707.5V842.5H712.5V843.5H720.5V845.5H723.5V824.5V850.5";
  for(var k=0;k<10;k++){var a=12-k*1.2;b+="H"+(725+k+.5)+"V"+(Math.round(852-a)+.5)+"V"+(Math.round(852+a)+.5);}
  b+="V852.5H1262";
  document.getElementById("tb").setAttribute("d",b);
})();
</script>
</body>
</html>
